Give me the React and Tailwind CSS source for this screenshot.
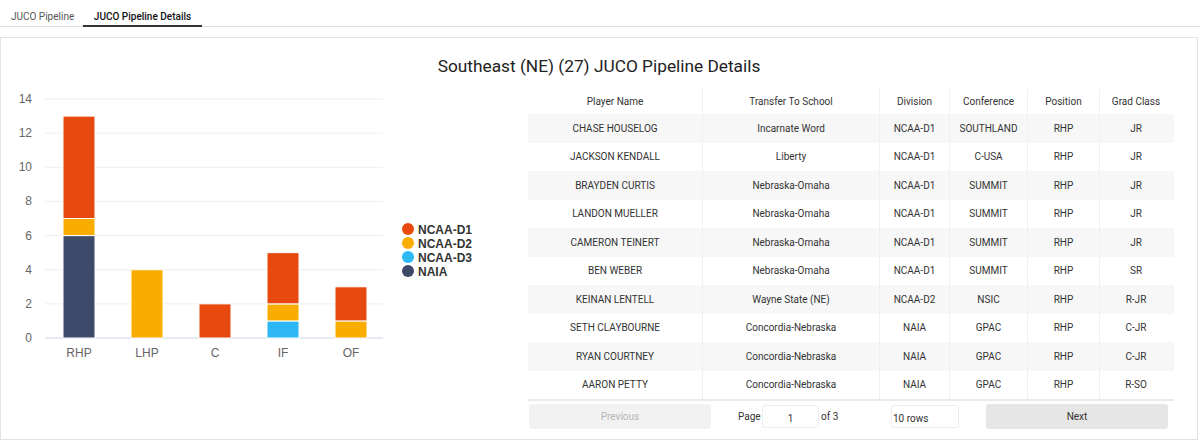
import React from "react";

const COLORS = {
  d1: "#e8490f",
  d2: "#f9ad00",
  d3: "#2db7f5",
  naia: "#3e4a69",
};

const bars = [
  { label: "RHP", segs: [["naia", 6], ["d2", 1], ["d1", 6]] },
  { label: "LHP", segs: [["d2", 4]] },
  { label: "C", segs: [["d1", 2]] },
  { label: "IF", segs: [["d3", 1], ["d2", 1], ["d1", 3]] },
  { label: "OF", segs: [["d2", 1], ["d1", 2]] },
];

const players = [
  ["CHASE HOUSELOG", "Incarnate Word", "NCAA-D1", "SOUTHLAND", "RHP", "JR"],
  ["JACKSON KENDALL", "Liberty", "NCAA-D1", "C-USA", "RHP", "JR"],
  ["BRAYDEN CURTIS", "Nebraska-Omaha", "NCAA-D1", "SUMMIT", "RHP", "JR"],
  ["LANDON MUELLER", "Nebraska-Omaha", "NCAA-D1", "SUMMIT", "RHP", "JR"],
  ["CAMERON TEINERT", "Nebraska-Omaha", "NCAA-D1", "SUMMIT", "RHP", "JR"],
  ["BEN WEBER", "Nebraska-Omaha", "NCAA-D1", "SUMMIT", "RHP", "SR"],
  ["KEINAN LENTELL", "Wayne State (NE)", "NCAA-D2", "NSIC", "RHP", "R-JR"],
  ["SETH CLAYBOURNE", "Concordia-Nebraska", "NAIA", "GPAC", "RHP", "C-JR"],
  ["RYAN COURTNEY", "Concordia-Nebraska", "NAIA", "GPAC", "RHP", "C-JR"],
  ["AARON PETTY", "Concordia-Nebraska", "NAIA", "GPAC", "RHP", "R-SO"],
];

const columns = [
  { title: "Player Name", w: "w-[174px]" },
  { title: "Transfer To School", w: "w-[177px]" },
  { title: "Division", w: "w-[70px]" },
  { title: "Conference", w: "w-[78px]" },
  { title: "Position", w: "w-[72px]" },
  { title: "Grad Class", w: "w-[73px]" },
];

const Chart = () => {
  const base = 253;
  const unit = 17.07;
  const y = (v) => base - v * unit;
  return (
    <svg width="520" height="290" style={{ fontFamily: "'Liberation Sans', Arial, sans-serif" }}>
      {[0, 2, 4, 6, 8, 10, 12, 14].map((v) => (
        <g key={v}>
          <line x1="44" x2="382" y1={y(v)} y2={y(v)} stroke={v === 0 ? "#ccd6eb" : "#eeeeee"} strokeWidth="1" />
          <text x="31" y={y(v) + 4} fontSize="12" fill="#666" textAnchor="end">
            {v}
          </text>
        </g>
      ))}
      {bars.map((b, i) => {
        const x = 62 + i * 68;
        let acc = 0;
        return (
          <g key={b.label}>
            {b.segs.map(([k, n]) => {
              const top = y(acc + n);
              const bottom = y(acc);
              acc += n;
              return (
                <rect key={k} x={x} y={top} width="32" height={bottom - top} fill={COLORS[k]} stroke="#fff" strokeWidth="1" />
              );
            })}
            <text x={x + 16} y="272" fontSize="12" fill="#666" textAnchor="middle">
              {b.label}
            </text>
          </g>
        );
      })}
      {[
        ["d1", "NCAA-D1"],
        ["d2", "NCAA-D2"],
        ["d3", "NCAA-D3"],
        ["naia", "NAIA"],
      ].map(([k, t], i) => (
        <g key={k}>
          <circle cx="407" cy={144 + i * 14} r="6" fill={COLORS[k]} />
          <text x="417" y={148.5 + i * 14} fontSize="12" fontWeight="bold" fill="#333">
            {t}
          </text>
        </g>
      ))}
    </svg>
  );
};

const App = () => {
  return (
    <div className="w-[1200px] h-[440px] bg-white overflow-hidden text-[#333]" style={{ fontFamily: "Roboto, 'Liberation Sans', sans-serif" }}>
      <div className="flex h-[27px] border-b border-[#dedede]">
        <div className="w-[83px] pl-[11px] pt-[9px] text-[10px] text-[#555]">JUCO Pipeline</div>
        <div className="w-[119px] pt-[9px] text-center text-[10px] font-medium text-[#111] border-b-2 border-[#333] h-[27px]">
          JUCO Pipeline Details
        </div>
      </div>
      <div className="mt-[10px] border border-[#e2e2e2] h-[403px] w-[1198px]">
        <div className="pt-[17px] text-center text-[17.3px] text-[#222] leading-[22px]">
          Southeast (NE) (27) JUCO Pipeline Details
        </div>
        <div className="flex mt-[8px]">
          <div className="w-[527px] shrink-0">
            <Chart />
          </div>
          <div className="w-[646px] pt-[4px]">
            <div className="text-[10px] text-[#333]">
              <div className="flex h-[25px] items-center">
                {columns.map((c, i) => (
                  <div key={c.title} className={`${c.w} text-center ${i > 0 ? "border-l border-[#f0f0f0]" : ""} h-full flex items-center justify-center`}>
                    {c.title}
                  </div>
                ))}
              </div>
              {players.map((p, r) => (
                <div key={p[0]} className={`flex h-[28.5px] ${r % 2 === 0 ? "bg-[#f7f7f7]" : "bg-white"}`}>
                  {p.map((cell, i) => (
                    <div key={i} className={`${columns[i].w} ${i > 0 ? "border-l border-[#f0f0f0]" : ""} flex items-center justify-center`}>
                      {cell}
                    </div>
                  ))}
                </div>
              ))}
              <div className="border-t-2 border-[#eaeaea]" />
            </div>
            <div className="flex items-center mt-[3px] h-[25px] text-[10px]">
              <div className="ml-[1px] w-[182px] h-[25px] bg-[#f2f2f2] text-[#b5b5b5] flex items-center justify-center rounded-[3px]">
                Previous
              </div>
              <div className="w-[275px] flex items-center">
                <div className="ml-[27px] w-[25px] text-[#333]">Page</div>
                <div className="w-[55px] h-[21px] bg-white shadow-[0_0_0_1px_#ececec] rounded-[3px] flex items-center justify-center pt-[4px]">1</div>
                <div className="ml-[3px] w-[60px]">of 3</div>
                <div className="ml-[11px] w-[66px] h-[21px] bg-white shadow-[0_0_0_1px_#ececec] rounded-[3px] flex items-center pl-[1px] pt-[4px]">10 rows</div>
              </div>
              <div className="w-[182px] h-[25px] bg-[#e6e6e6] text-[#333] flex items-center justify-center rounded-[3px]">
                Next
              </div>
            </div>
          </div>
        </div>
      </div>
    </div>
  );
};

export default App;
